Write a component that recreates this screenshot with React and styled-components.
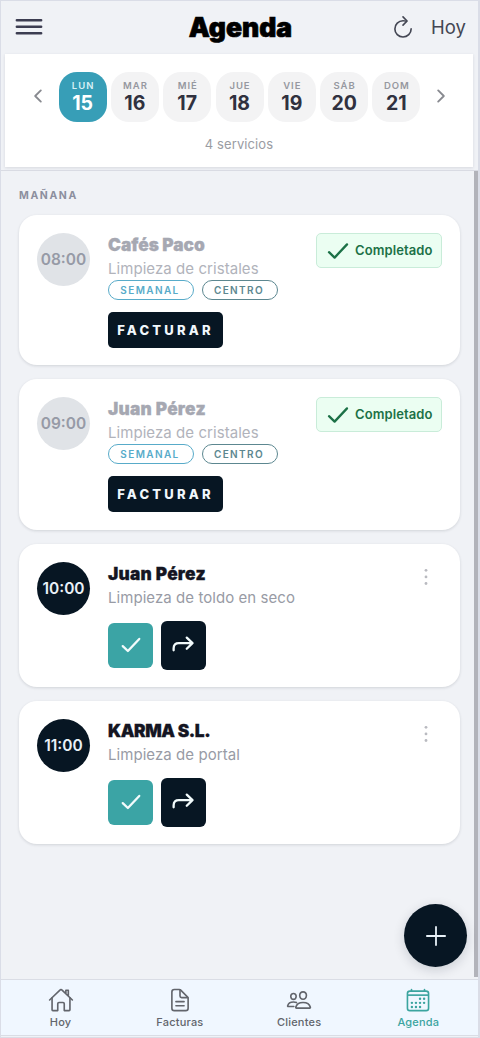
import React, { useState } from "react";
import styled, { createGlobalStyle } from "styled-components";
import {
  IoHomeOutline,
  IoDocumentTextOutline,
  IoPeopleOutline,
  IoCalendarOutline,
  IoChevronBack,
  IoChevronForward,
  IoRefreshOutline,
} from "react-icons/io5";

const days = [
  { name: "LUN", number: 15 },
  { name: "MAR", number: 16 },
  { name: "MIÉ", number: 17 },
  { name: "JUE", number: 18 },
  { name: "VIE", number: 19 },
  { name: "SÁB", number: 20 },
  { name: "DOM", number: 21 },
];

const services = [
  { time: "08:00", client: "Cafés Paco", work: "Limpieza de cristales", done: true, spacing: "0px" },
  { time: "09:00", client: "Juan Pérez", work: "Limpieza de cristales", done: true, spacing: "0.25px" },
  { time: "10:00", client: "Juan Pérez", work: "Limpieza de toldo en seco", spacing: "0.25px" },
  { time: "11:00", client: "KARMA S.L.", work: "Limpieza de portal", spacing: "-0.4px" },
];

const tabs = [
  { label: "Hoy", Icon: IoHomeOutline },
  { label: "Facturas", Icon: IoDocumentTextOutline },
  { label: "Clientes", Icon: IoPeopleOutline },
  { label: "Agenda", Icon: IoCalendarOutline },
];

const Check = ({ size, stroke }) => (
  <svg width={size} height={size} viewBox="0 0 24 24" fill="none">
    <path d="M3 13.2 8.6 18.6 21 5.4" stroke="currentColor" strokeWidth={stroke} strokeLinecap="round" strokeLinejoin="round" />
  </svg>
);

const ServiceCard = ({ service }) => {
  const { time, client, work, done, spacing } = service;

  return (
    <Card>
      <Time $done={done}>{time}</Time>
      <Info>
        <Client $done={done} $spacing={spacing}>
          {client}
        </Client>
        <Work $done={done}>{work}</Work>
        {done ? (
          <>
            <Tags>
              <Tag $color="#58abc9" $width="86px">SEMANAL</Tag>
              <Tag $color="#5c8790" $width="76px">CENTRO</Tag>
            </Tags>
            <InvoiceButton>FACTURAR</InvoiceButton>
          </>
        ) : (
          <Actions>
            <ActionButton $color="#3ba4a5" $height="45px">
              <Check size={22} stroke={2.5} />
            </ActionButton>
            <ActionButton $color="#071623" $height="49px">
              <svg width="23" height="23" viewBox="0 0 24 24" fill="none" stroke="currentColor" strokeWidth="2.4" strokeLinecap="round" strokeLinejoin="round">
                <path d="M1.7 17v-2.2c0-3.7 2-5.2 5.4-5.2H21.4M15.4 3.8l6 5.8-6 5.8" />
              </svg>
            </ActionButton>
          </Actions>
        )}
      </Info>
      {done ? (
        <Status>
          <Check size={24} stroke={2.3} />
          Completado
        </Status>
      ) : (
        <More>
          <svg width="4" height="18" viewBox="0 0 4 18" fill="currentColor">
            <circle cx="2" cy="2.3" r="1.4" />
            <circle cx="2" cy="8.9" r="1.4" />
            <circle cx="2" cy="15.5" r="1.4" />
          </svg>
        </More>
      )}
    </Card>
  );
};

const App = () => {
  const [selected, setSelected] = useState(15);
  const [tab, setTab] = useState("Agenda");

  return (
    <Screen>
      <GlobalStyle />
      <Header>
        <MenuButton>
          <svg width="28" height="18" viewBox="0 0 28 18" stroke="currentColor" strokeWidth="2.6" strokeLinecap="round">
            <path d="M1.9 2.2h24.2M1.9 8.7h24.2M1.9 15.2h24.2" />
          </svg>
        </MenuButton>
        <Title>Agenda</Title>
        <HeaderActions>
          <IoRefreshOutline size={26} />
          <span>Hoy</span>
        </HeaderActions>
      </Header>

      <Week>
        <Days>
          <Arrow>
            <IoChevronBack size={20} />
          </Arrow>
          {days.map(({ name, number }) => (
            <Day key={number} $active={number === selected} onClick={() => setSelected(number)}>
              <small>{name}</small>
              <strong>{number}</strong>
            </Day>
          ))}
          <Arrow>
            <IoChevronForward size={20} />
          </Arrow>
        </Days>
        <Count>4 servicios</Count>
      </Week>

      <Body>
        <List>
          <Section>MAÑANA</Section>
          {services.map((service) => (
            <ServiceCard key={service.time} service={service} />
          ))}
        </List>
        <Scrollbar />
        <AddButton>
          <svg width="20" height="20" viewBox="0 0 20 20" stroke="currentColor" strokeWidth="1.8" strokeLinecap="round">
            <path d="M10 .9v18.2M.9 10h18.2" />
          </svg>
        </AddButton>
      </Body>

      <TabBar>
        {tabs.map(({ label, Icon }) => (
          <Tab key={label} $active={label === tab} onClick={() => setTab(label)}>
            <Icon size={26} />
            <span>{label}</span>
          </Tab>
        ))}
      </TabBar>
    </Screen>
  );
};

export default App;

const GlobalStyle = createGlobalStyle`
  * {
    box-sizing: border-box;
  }

  body {
    margin: 0;
    background: #f0f2f6;
    font-family: Inter, "Liberation Sans", sans-serif;
  }

  button {
    border: none;
    padding: 0;
    background: none;
    font-family: inherit;
    cursor: pointer;
  }

  svg {
    display: block;
    flex: none;
  }
`;

const Screen = styled.div`
  width: 480px;
  height: 1038px;
  padding-bottom: 1px;
  display: flex;
  flex-flow: column nowrap;
  border: 1px solid #dadde7;
  border-right-width: 2px;
  background: #f0f2f6;
  overflow: hidden;
`;

const Header = styled.header`
  height: 53px;
  flex: none;
  padding: 0 12px 2px 14px;
  display: grid;
  grid-template-columns: 1fr auto 1fr;
  align-items: center;
`;

const MenuButton = styled.button`
  justify-self: start;
  color: #3c3d51;
`;

const Title = styled.h1`
  margin: 0;
  color: #000;
  font-size: 26.5px;
  font-weight: 900;
  letter-spacing: 0;
  line-height: 32px;
  -webkit-text-stroke: 0.7px #000;
`;

const HeaderActions = styled.div`
  justify-self: end;
  display: flex;
  align-items: center;
  gap: 15px;
  color: #434653;
  font-size: 18.5px;
`;

const Week = styled.section`
  height: 113px;
  margin: 0 5px 0 4px;
  flex: none;
  padding-top: 18px;
  background: #fff;
  box-shadow: 0 1px 3px rgba(30, 35, 60, 0.12);
`;

const Days = styled.div`
  padding-left: 1px;
  display: flex;
  justify-content: center;
  gap: 4.3px;
`;

const Arrow = styled.button`
  width: 28px;
  height: 48px;
  display: flex;
  align-items: center;
  justify-content: center;
  color: #888a90;

  &:first-child {
    margin-right: 2px;
  }

  &:last-child {
    margin-left: 2px;
  }
`;

const Day = styled.button`
  width: 48px;
  height: 50px;
  padding-top: 8px;
  display: flex;
  flex-flow: column nowrap;
  align-items: center;
  border-radius: 18px;
  background: ${({ $active }) => ($active ? "#379eb7" : "#f3f3f4")};

  small {
    color: ${({ $active }) => ($active ? "#d8f0f5" : "#9698a0")};
    font-size: 9.5px;
    font-weight: 600;
    letter-spacing: 1px;
    line-height: 12px;
    margin-right: -1px;
  }

  strong {
    color: ${({ $active }) => ($active ? "#fff" : "#30313f")};
    font-size: 19.5px;
    font-weight: 700;
    line-height: 22px;
  }
`;

const Count = styled.p`
  margin: 13px 0 0;
  color: #9a9ca3;
  font-size: 13px;
  letter-spacing: 0.1px;
  line-height: 18px;
  text-align: center;
`;

const Body = styled.main`
  position: relative;
  flex: 1;
  min-height: 0;
  margin-top: 3px;
  display: flex;
  border-top: 1px solid #d9dbe3;
`;

const List = styled.div`
  flex: 1;
  padding: 18px 14px 0 18px;
  display: flex;
  flex-flow: column nowrap;
`;

const Section = styled.h2`
  margin: 0 0 12px;
  color: #8c8f9e;
  font-size: 10.5px;
  font-weight: 700;
  letter-spacing: 1.6px;
  line-height: 14px;
`;

const Card = styled.article`
  margin-bottom: 14px;
  padding: 18px 18px 17.3px;
  display: flex;
  align-items: flex-start;
  border-radius: 18px;
  background: #fff;
  box-shadow: 0 1px 3px rgba(20, 25, 45, 0.14);
`;

const Time = styled.div`
  width: 53px;
  height: 53px;
  flex: none;
  margin-right: 18px;
  border-radius: 50%;
  font-size: 15.5px;
  font-weight: 600;
  line-height: 54px;
  text-align: center;
  white-space: nowrap;
  color: ${({ $done }) => ($done ? "#969aa6" : "#e9f0f7")};
  background: ${({ $done }) => ($done ? "#e0e3e7" : "#071623")};
`;

const Info = styled.div`
  flex: 1;
  min-width: 0;
`;

const Client = styled.h3`
  margin: 0;
  font-size: 17.3px;
  font-weight: 900;
  letter-spacing: ${({ $spacing }) => $spacing};
  line-height: 23px;
  white-space: nowrap;
  color: ${({ $done }) => ($done ? "#a6a8b2" : "#141522")};
  -webkit-text-stroke: 0.3px currentColor;
`;

const Work = styled.p`
  margin: 0;
  padding-top: 1px;
  font-size: 15px;
  letter-spacing: 0.06px;
  line-height: 23px;
  white-space: nowrap;
  color: ${({ $done }) => ($done ? "#b1b3bb" : "#989ba5")};
`;

const Tags = styled.div`
  margin-top: -0.5px;
  display: flex;
  gap: 8px;
`;

const Tag = styled.span`
  width: ${({ $width }) => $width};
  height: 20px;
  padding-right: 2px;
  border: 1.5px solid ${({ $color }) => $color};
  border-radius: 10px;
  color: ${({ $color }) => $color};
  font-size: 10px;
  font-weight: 600;
  letter-spacing: 1.4px;
  line-height: 18px;
  text-align: center;
`;

const InvoiceButton = styled.button`
  width: 115px;
  height: 36px;
  margin-top: 12.5px;
  display: block;
  border-radius: 5px;
  background: #071623;
  color: #f1f7fc;
  font-size: 13px;
  font-weight: 800;
  letter-spacing: 3.2px;
  line-height: 35px;
`;

const Status = styled.div`
  width: 126px;
  height: 35px;
  flex: none;
  padding-left: 9px;
  display: flex;
  align-items: center;
  gap: 5px;
  border: 1px solid #c9ecd9;
  border-radius: 5px;
  background: #ebfef2;
  color: #1c7147;
  font-size: 13px;
  font-weight: 600;
  letter-spacing: 0.1px;
  line-height: 33px;
`;

const Actions = styled.div`
  height: 49px;
  margin-top: 12px;
  display: flex;
  align-items: center;
  gap: 8px;
`;

const ActionButton = styled.button`
  width: 45px;
  height: ${({ $height }) => $height};
  display: flex;
  align-items: center;
  justify-content: center;
  border-radius: 6px;
  background: ${({ $color }) => $color};
  color: #f2fbfc;
`;

const More = styled.button`
  width: 4px;
  margin: 6px 14px 0 0;
  color: #b9bac0;
`;

const Scrollbar = styled.div`
  width: 4px;
  margin-bottom: 2px;
  background: #b2b3ba;
`;

const AddButton = styled.button`
  position: absolute;
  right: 11px;
  bottom: 12px;
  width: 63px;
  height: 63px;
  display: flex;
  align-items: center;
  justify-content: center;
  border-radius: 50%;
  background: #071623;
  color: #e8f1f8;
  box-shadow: 0 3px 12px rgba(5, 20, 35, 0.16);
`;

const TabBar = styled.nav`
  height: 57px;
  flex: none;
  display: flex;
  border-top: 1px solid #dadde5;
  border-bottom: 1px solid #dadde5;
  background: #f0f7ff;
`;

const Tab = styled.button`
  flex: 1;
  padding-top: 7px;
  display: flex;
  flex-flow: column nowrap;
  align-items: center;
  gap: 2px;
  color: ${({ $active }) => ($active ? "#3ba49f" : "#62656c")};
  font-size: 11px;
  font-weight: 500;
  letter-spacing: 0.2px;
  line-height: 14px;
`;
